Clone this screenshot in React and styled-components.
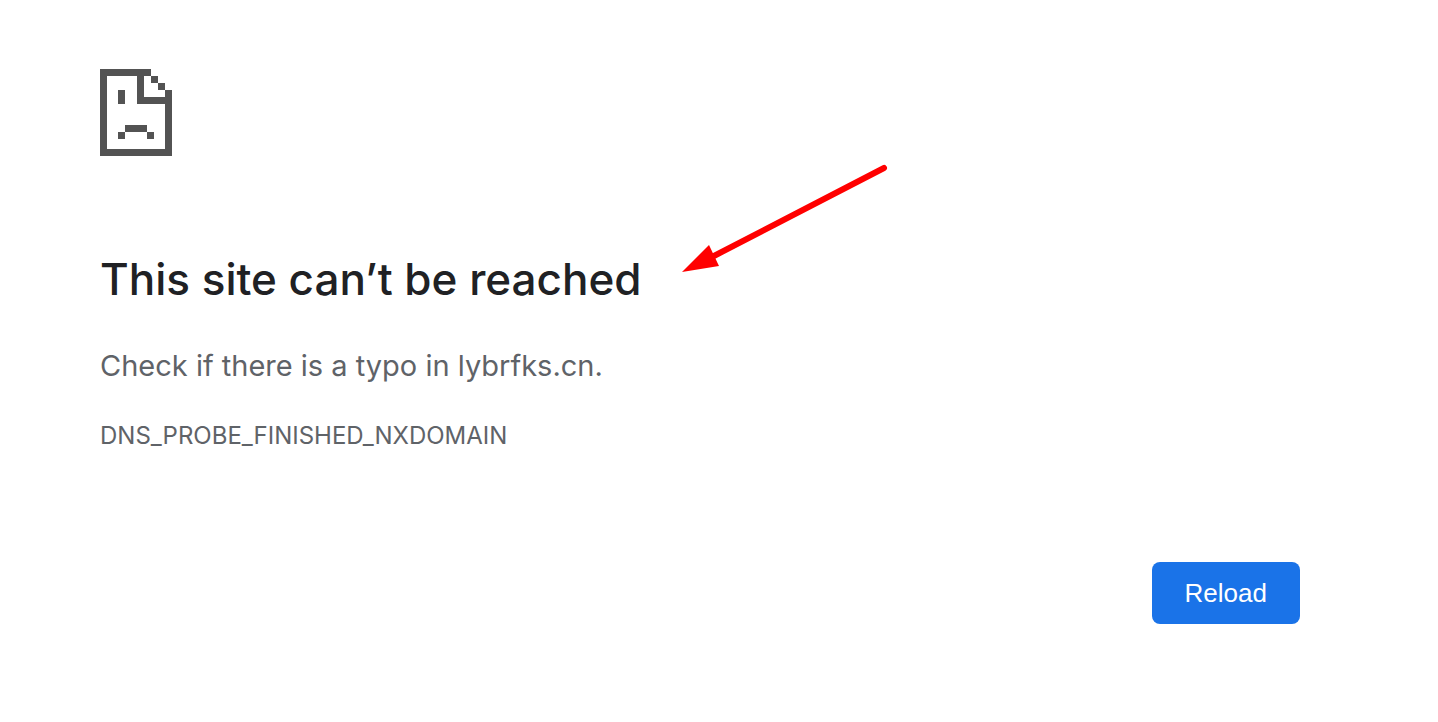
import React from 'react';
import styled, { createGlobalStyle } from 'styled-components';

const host = 'lybrfks.cn';
const errorCode = 'DNS_PROBE_FINISHED_NXDOMAIN';

const App = () => (
  <>
    <GlobalStyle />
    <Page>
      <SadPage viewBox="0 0 72 87" aria-hidden="true">
        <path d="M0 0H51V7H44V28H65V21H72V87H0ZM7 7V80H65V35H37V7Z" />
        <path d="M51 7h7v7h-7zM58 14h7v7h-7z" />
        <path d="M18 21h7v14h-7zM25 56h22v7h-22zM18 63h7v7h-7zM47 63h7v7h-7z" />
      </SadPage>

      <TitleRow>
        <Title>This site can’t be reached</Title>
        <Arrow viewBox="0 0 206 110" aria-hidden="true">
          <path d="M202 6L30 95" stroke="#f00" strokeWidth="6" strokeLinecap="round" />
          <path d="M0 110L27 83L37 104Z" fill="#f00" />
        </Arrow>
      </TitleRow>

      <Summary>Check if there is a typo in {host}.</Summary>
      <ErrorCode>{errorCode}</ErrorCode>

      <Actions>
        <ReloadButton type="button" onClick={() => window.location.reload()}>
          Reload
        </ReloadButton>
      </Actions>
    </Page>
  </>
);

export default App;

// STYLES
const GlobalStyle = createGlobalStyle`
  body {
    margin: 0;
    background: #fff;
    color: #5f6368;
    font-family: Inter, "Liberation Sans", sans-serif;
  }
`;

const Page = styled.main`
  padding: 69px 138px 64px 100px;
`;

const SadPage = styled.svg`
  display: block;
  width: 72px;
  height: 87px;
  fill: #535353;
  shape-rendering: crispEdges;
`;

const TitleRow = styled.div`
  position: relative;
  width: fit-content;
  margin-top: 94px;
`;

const Title = styled.h1`
  margin: 0;
  color: #202124;
  font-size: 44px;
  font-weight: 500;
  line-height: 58px;
`;

const Arrow = styled.svg`
  position: absolute;
  left: 582px;
  bottom: 36px;
  width: 206px;
  height: 110px;
  fill: none;
`;

const Summary = styled.p`
  margin: 34px 0 0;
  font-size: 29px;
  line-height: 48px;
`;

const ErrorCode = styled.div`
  margin-top: 26px;
  font-size: 24px;
  line-height: 40px;
`;

const Actions = styled.div`
  display: flex;
  justify-content: flex-end;
  margin-top: 106px;
`;

const ReloadButton = styled.button`
  padding: 16px 33px;
  border: none;
  border-radius: 8px;
  background: #1a73e8;
  color: #fff;
  font-family: "Liberation Sans", Arial, sans-serif;
  font-size: 26px;
  line-height: 30px;
  cursor: pointer;

  &:hover {
    background: #1765cc;
  }
`;
